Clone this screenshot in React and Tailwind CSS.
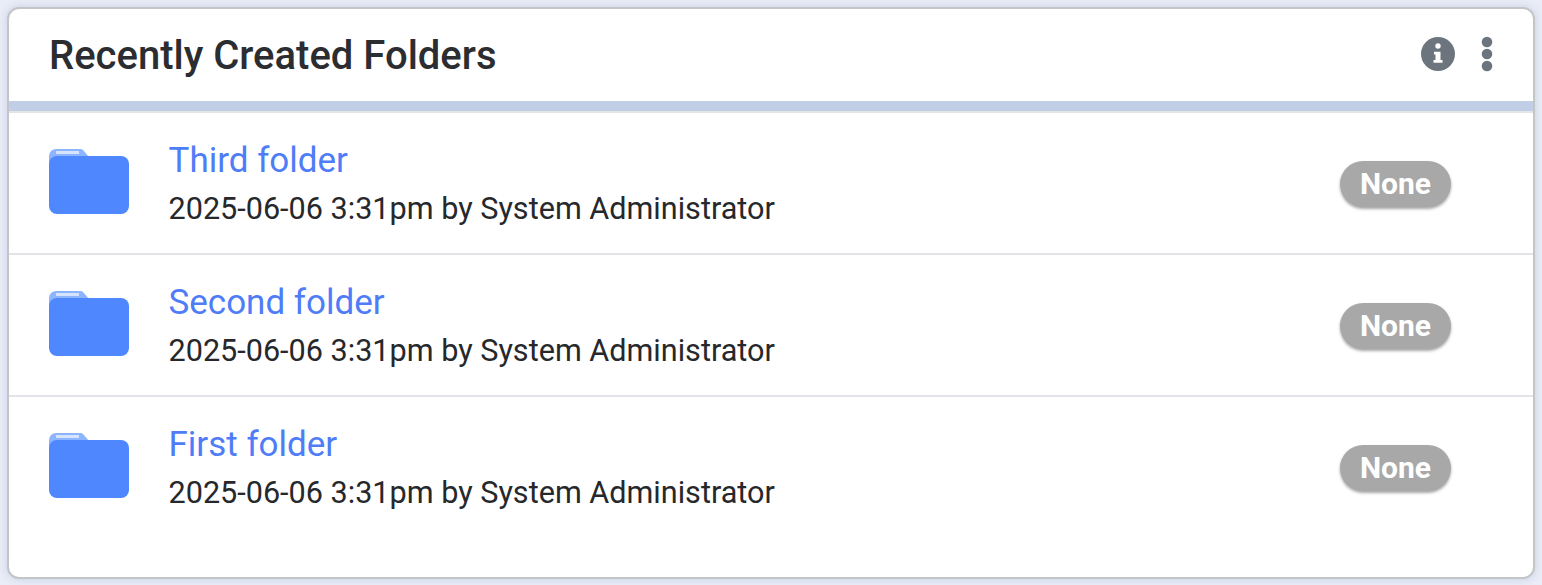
const rows = ["Third folder", "Second folder", "First folder"];

function Folder() {
  return (
    <svg width="80" height="66" viewBox="0 0 80 66" className="block">
      <path d="M0 8a7 7 0 0 1 7-7h24c1.500 0 2.500 .5 3.500 1.500L40 9v6H0z" fill="#8db4ff" />
      <rect x="7" y="3" width="23" height="3" fill="#d5e3ff" />
      <rect x="0" y="8" width="80" height="58" rx="8" fill="#4f87ff" />
    </svg>
  );
}

function Row({ name, last }) {
  return (
    <div className={`flex h-[142px] pl-[40px] pr-[82px] ${last ? "" : "border-b-2 border-[#e2e4e8]"}`}>
      <div className="w-[120px] pt-[35px] shrink-0">
        <Folder />
      </div>
      <div className="flex-1 pt-[26px] -ml-[0.5px]">
        <div className="text-[35px] leading-[44px] text-[#4f7cf7]">{name}</div>
        <div className="text-[30.6px] leading-[44px] mt-[4px] text-[#26282b]">2025-06-06 3:31pm by System Administrator</div>
      </div>
      <div className="pt-[48px]">
        <div className="h-[46px] w-[111px] pb-[2px] rounded-full bg-[#a8a8a8] shadow-[0_2px_3px_rgba(0,0,0,0.35)] flex items-center justify-center text-white font-bold text-[30px]">None</div>
      </div>
    </div>
  );
}

export default function App() {
  return (
    <div className="w-[1542px] h-[585px] pl-[7px] pt-[7px] bg-[#eaedf7] font-['Roboto',sans-serif] overflow-hidden">
      <div className="w-[1528px] h-[572px] rounded-[12px] border-2 border-[#c4c5c7] bg-white overflow-hidden shadow-[0_0_8px_rgba(120,135,190,0.3)]">
        <div className="h-[92px] flex items-center pl-[40px] pr-[40px]">
          <div className="flex-1 text-[40px] font-medium text-[#2b2d30] leading-none pt-[2px]">Recently Created Folders</div>
          <svg width="36" height="36" viewBox="0 0 36 36" className="mr-[25px] mb-[3px]">
            <circle cx="18" cy="18" r="17" fill="#6c757d" />
            <circle cx="18" cy="10" r="2.700" fill="#fff" />
            <path d="M14 15.700h6.500v8.300h2v2.700h-9v-2.700h2v-5.600h-1.500z" fill="#fff" />
          </svg>
          <svg width="12" height="36" viewBox="0 0 12 36" className="mb-[3px]">
            <circle cx="6" cy="6" r="5.300" fill="#6c757d" />
            <circle cx="6" cy="18" r="5.300" fill="#6c757d" />
            <circle cx="6" cy="30" r="5.300" fill="#6c757d" />
          </svg>
        </div>
        <div className="h-[10px] bg-[#c0cfe6]" />
        <div className="border-t-2 border-[#e2e4e8]" />
        {rows.map((r, i) => <Row key={r} name={r} last={i === 2} />)}
      </div>
    </div>
  );
}
